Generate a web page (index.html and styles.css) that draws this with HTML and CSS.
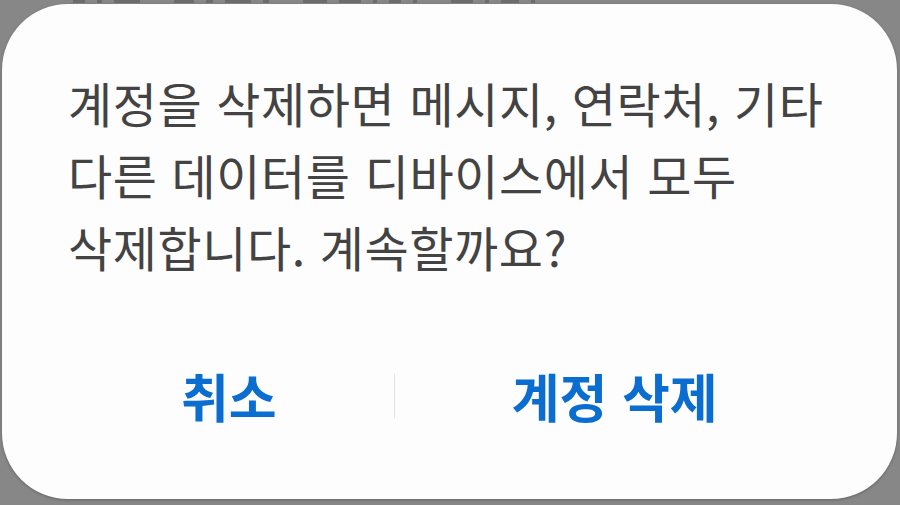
FILE: index.html
```html
<!DOCTYPE html>
<html lang="ko">
<head>
<meta charset="utf-8">
<link rel="stylesheet" href="styles.css">
</head>
<body>
<div class="peek" aria-hidden="true">
  <i class="m w12"></i><i class="m w5"></i><i class="m w26"></i><i class="m w20 gap"></i><i class="m w7"></i><i class="m w26"></i>
  <i class="m w6"></i><i class="m w24 gap"></i><i class="m w22"></i><i class="m w4"></i><i class="m w12"></i><i class="m w4"></i>
  <i class="m w22 gap"></i><i class="m w4"></i><i class="m w18"></i><i class="m w4"></i>
</div>
<div class="dialog">
  <p class="msg">계정을 삭제하면 메시지, 연락처, 기타<br>다른 데이터를 디바이스에서 모두<br>삭제합니다. 계속할까요?</p>
  <div class="actions">
    <button class="btn">취소</button>
    <span class="divider"></span>
    <button class="btn">계정 삭제</button>
  </div>
</div>
</body>
</html>
```
FILE: styles.css
```css
html, body {
  margin: 0;
  padding: 0;
  width: 900px;
  height: 505px;
  overflow: hidden;
  background: #878787;
  font-family: "Noto Sans CJK KR", "Noto Sans", sans-serif;
}
.peek {
  height: 4px;
  overflow: hidden;
  padding-left: 73px;
  display: flex;
  gap: 12px;
}
.m {
  display: block;
  height: 3px;
  background: #6c6c6c;
}
.gap { margin-left: 22px; }
.w4 { width: 4px; }
.w5 { width: 5px; }
.w6 { width: 6px; }
.w7 { width: 7px; }
.w12 { width: 12px; }
.w18 { width: 18px; }
.w20 { width: 20px; }
.w22 { width: 22px; }
.w24 { width: 24px; }
.w26 { width: 26px; }
.dialog {
  margin: 0 3px 0 2px;
  height: 495px;
  background: #fdfdfd;
  border-radius: 66px;
  box-shadow: 0 1px 3px rgba(0,0,0,0.25);
  display: flex;
  flex-direction: column;
}
.msg {
  margin: 0;
  padding: 62px 0 0 66px;
  font-size: 48px;
  line-height: 72px;
  color: #434343;
  letter-spacing: 0.6px;
}
.actions {
  display: flex;
  align-items: center;
  padding-left: 179px;
  margin-top: 84px;
  gap: 117px;
}
.btn {
  border: 0;
  background: none;
  padding: 0;
  font-family: inherit;
  font-size: 52px;
  font-weight: 700;
  color: #0a6dcf;
  line-height: 60px;
}
.divider {
  width: 1px;
  height: 44px;
  background: #e2e2e2;
}
```
